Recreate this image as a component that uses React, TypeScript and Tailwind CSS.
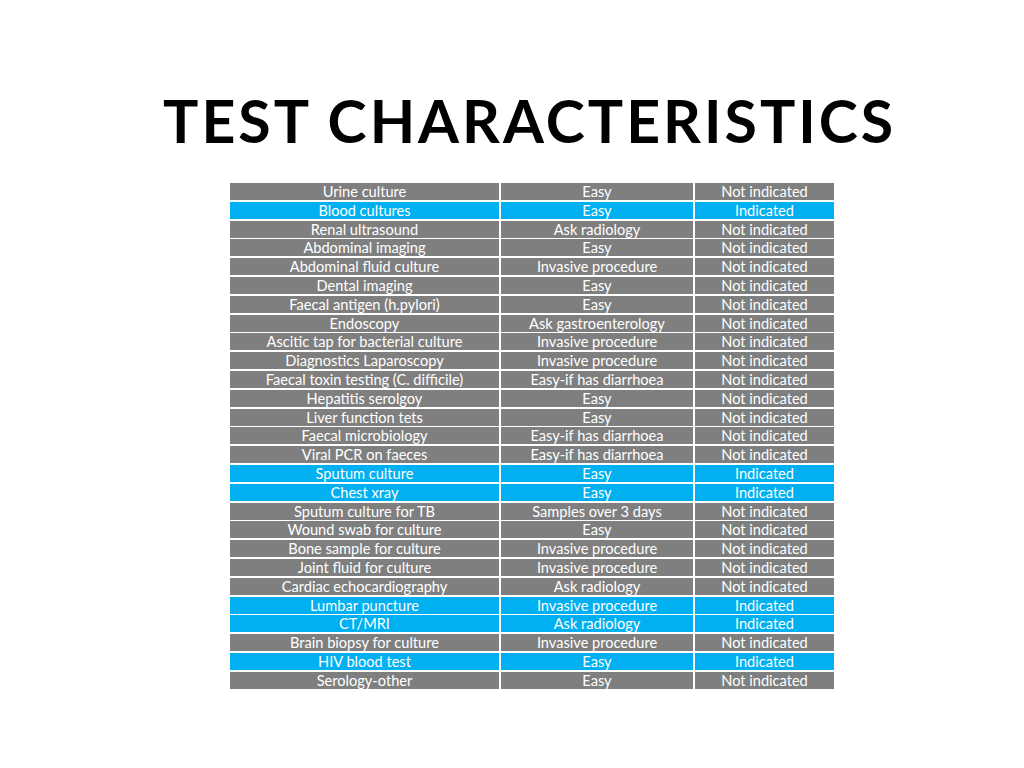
import * as React from "react";

type Row = [string, string, string];

const rows: Row[] = [
  ["Urine culture", "Easy", "Not indicated"],
  ["Blood cultures", "Easy", "Indicated"],
  ["Renal ultrasound", "Ask radiology", "Not indicated"],
  ["Abdominal imaging", "Easy", "Not indicated"],
  ["Abdominal fluid culture", "Invasive procedure", "Not indicated"],
  ["Dental imaging", "Easy", "Not indicated"],
  ["Faecal antigen (h.pylori)", "Easy", "Not indicated"],
  ["Endoscopy", "Ask gastroenterology", "Not indicated"],
  ["Ascitic tap for bacterial culture", "Invasive procedure", "Not indicated"],
  ["Diagnostics Laparoscopy", "Invasive procedure", "Not indicated"],
  ["Faecal toxin testing (C. difficile)", "Easy-if has diarrhoea", "Not indicated"],
  ["Hepatitis serolgoy", "Easy", "Not indicated"],
  ["Liver function tets", "Easy", "Not indicated"],
  ["Faecal microbiology", "Easy-if has diarrhoea", "Not indicated"],
  ["Viral PCR on faeces", "Easy-if has diarrhoea", "Not indicated"],
  ["Sputum culture", "Easy", "Indicated"],
  ["Chest xray", "Easy", "Indicated"],
  ["Sputum culture for TB", "Samples over 3 days", "Not indicated"],
  ["Wound swab for culture", "Easy", "Not indicated"],
  ["Bone sample for culture", "Invasive procedure", "Not indicated"],
  ["Joint  fluid for culture", "Invasive procedure", "Not indicated"],
  ["Cardiac echocardiography", "Ask radiology", "Not indicated"],
  ["Lumbar puncture", "Invasive procedure", "Indicated"],
  ["CT/MRI", "Ask radiology", "Indicated"],
  ["Brain biopsy for culture", "Invasive procedure", "Not indicated"],
  ["HIV blood test", "Easy", "Indicated"],
  ["Serology-other", "Easy", "Not indicated"],
];

export default function App() {
  return (
    <div className="w-[1024px] h-[768px] bg-white flex flex-col" style={{ fontFamily: "Lato, 'Open Sans', sans-serif" }}>
      <h1 className="mt-[86px] ml-[163px] h-[70px] text-[59px] leading-[70px] font-bold text-black tracking-[3px] whitespace-nowrap">
        TEST CHARACTERISTICS
      </h1>
      <div className="mt-[27px] ml-[230px] w-[604px] flex flex-col gap-[1.8px] bg-white">
        {rows.map((r, i) => {
          const hit = r[2] === "Indicated";
          const bg = hit ? "bg-[#00b0f0]" : "bg-[#7f7f7f]";
          return (
            <div key={i} className="flex gap-[2px] h-[17px] text-white text-[14.6px] leading-[17px] whitespace-nowrap">
              <div className={`${bg} w-[269px] text-center`}>{r[0]}</div>
              <div className={`${bg} w-[192px] text-center`}>{r[1]}</div>
              <div className={`${bg} flex-1 text-center`}>{r[2]}</div>
            </div>
          );
        })}
      </div>
    </div>
  );
}
